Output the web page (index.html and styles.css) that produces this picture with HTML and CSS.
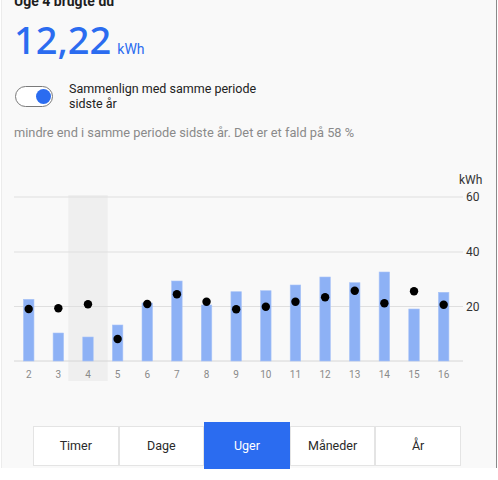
FILE: index.html
```html
<!DOCTYPE html>
<html lang="da">
<head>
<meta charset="utf-8">
<title>Forbrug</title>
<link rel="stylesheet" href="styles.css">
</head>
<body>
<div class="panel">
  <div class="title">Uge 4 brugte du</div>
  <div class="amount"><span class="amount-value">12,22</span><span class="amount-unit">kWh</span></div>
  <div class="compare">
    <div class="toggle"><span class="knob"></span></div>
    <div class="compare-label">Sammenlign med samme periode<br>sidste år</div>
  </div>
  <div class="note">mindre end i samme periode sidste år. Det er et fald på 58 %</div>
  <svg class="chart" width="494" height="215" viewBox="2 170 494 215">
    <rect class="hl" x="68.3" y="195" width="39.4" height="186"/>
    <g class="grid">
      <line x1="14" y1="197" x2="463" y2="197"/>
      <line x1="14" y1="252" x2="463" y2="252"/>
      <line x1="14" y1="306.5" x2="463" y2="306.5"/>
      <line class="base" x1="14" y1="361" x2="463" y2="361"/>
    </g>
    <text class="unit" x="459" y="184">kWh</text>
    <text class="ylab" x="466" y="201">60</text>
    <text class="ylab" x="466" y="256">40</text>
    <text class="ylab" x="466" y="310.5">20</text>
    <g class="bars">
      <rect x="23.45" y="299.3" width="10.5" height="61.7"/>
      <rect x="53.09" y="333" width="10.5" height="28"/>
      <rect x="82.73" y="337" width="10.5" height="24"/>
      <rect x="112.37" y="325" width="10.5" height="36"/>
      <rect x="142.01" y="303" width="10.5" height="58"/>
      <rect x="171.65" y="281" width="10.5" height="80"/>
      <rect x="201.29" y="305" width="10.5" height="56"/>
      <rect x="230.93" y="291.7" width="10.5" height="69.3"/>
      <rect x="260.57" y="290.7" width="10.5" height="70.3"/>
      <rect x="290.21" y="285" width="10.5" height="76"/>
      <rect x="319.85" y="277" width="10.5" height="84"/>
      <rect x="349.49" y="282.7" width="10.5" height="78.3"/>
      <rect x="379.13" y="272" width="10.5" height="89"/>
      <rect x="408.77" y="309" width="10.5" height="52"/>
      <rect x="438.41" y="292.3" width="10.5" height="68.7"/>
    </g>
    <g class="dots">
      <circle cx="28.7" cy="309" r="4.2"/>
      <circle cx="58.34" cy="308.3" r="4.2"/>
      <circle cx="87.98" cy="304.3" r="4.2"/>
      <circle cx="117.62" cy="339" r="4.2"/>
      <circle cx="147.26" cy="304" r="4.2"/>
      <circle cx="176.9" cy="294.3" r="4.2"/>
      <circle cx="206.54" cy="301.7" r="4.2"/>
      <circle cx="236.18" cy="309.3" r="4.2"/>
      <circle cx="265.82" cy="306.7" r="4.2"/>
      <circle cx="295.46" cy="301.7" r="4.2"/>
      <circle cx="325.1" cy="297.3" r="4.2"/>
      <circle cx="354.74" cy="290.7" r="4.2"/>
      <circle cx="384.38" cy="303.3" r="4.2"/>
      <circle cx="414.02" cy="291.3" r="4.2"/>
      <circle cx="443.66" cy="304.7" r="4.2"/>
    </g>
    <g class="xlab">
      <text x="28.7" y="377.5">2</text>
      <text x="58.34" y="377.5">3</text>
      <text x="87.98" y="377.5">4</text>
      <text x="117.62" y="377.5">5</text>
      <text x="147.26" y="377.5">6</text>
      <text x="176.9" y="377.5">7</text>
      <text x="206.54" y="377.5">8</text>
      <text x="236.18" y="377.5">9</text>
      <text x="265.82" y="377.5">10</text>
      <text x="295.46" y="377.5">11</text>
      <text x="325.1" y="377.5">12</text>
      <text x="354.74" y="377.5">13</text>
      <text x="384.38" y="377.5">14</text>
      <text x="414.02" y="377.5">15</text>
      <text x="443.66" y="377.5">16</text>
    </g>
  </svg>
  <div class="tabs">
    <div class="tab">Timer</div>
    <div class="tab">Dage</div>
    <div class="tab active">Uger</div>
    <div class="tab">Måneder</div>
    <div class="tab">År</div>
  </div>
</div>
</body>
</html>
```

FILE: styles.css
```css
html, body {
  margin: 0;
  padding: 0;
  background: #ffffff;
}
body {
  font-family: Roboto, "Noto Sans", "Liberation Sans", sans-serif;
  color: #222222;
  width: 498px;
  height: 480px;
  overflow: hidden;
}
.panel {
  margin: 2px 0 0 1px;
  width: 496px;
  height: 476px;
  box-sizing: border-box;
  background: #f9f9f9;
  border-left: 1px solid #ececec;
  border-right: 1px solid #8a8a8a;
  padding-left: 12px;
}
.title {
  margin-top: -10px;
  font-size: 14px;
  line-height: 18px;
  font-weight: 700;
  color: #1e1e1e;
}
.amount {
  margin-top: 9px;
  height: 40px;
  line-height: 40px;
  font-family: "Noto Sans", Roboto, sans-serif;
  font-size: 38px;
  color: #2b6cf0;
}
.amount-value {
  font-weight: 500;
}
.amount-unit {
  font-family: Roboto, "Noto Sans", sans-serif;
  font-size: 14px;
  line-height: 1;
  margin-left: 6px;
}
.compare {
  margin-top: 22px;
  display: flex;
  align-items: center;
  height: 30px;
}
.toggle {
  margin-left: 1px;
  width: 38px;
  height: 21px;
  box-sizing: border-box;
  border: 1px solid #7a7a7a;
  border-radius: 11px;
  background: #ffffff;
  display: flex;
  align-items: center;
  justify-content: flex-end;
  padding-right: 1px;
}
.knob {
  width: 15px;
  height: 15px;
  border-radius: 50%;
  background: #2b6cf0;
}
.compare-label {
  margin-left: 16px;
  font-size: 12.5px;
  line-height: 15px;
  color: #222222;
}
.note {
  margin-top: 14px;
  font-size: 12.8px;
  line-height: 16px;
  color: #8a8a8a;
}
.chart {
  display: block;
  margin-top: 29px;
  margin-left: -12px;
}
.hl { fill: #efefef; }
.grid line { stroke: #dfdfdf; stroke-width: 1; }
.grid .base { stroke: #d6d6d6; }
.bars rect { fill: #8db1f5; stroke: #a9c4f7; stroke-width: 0.6; }
.dots circle { fill: #000000; }
.unit { font-size: 12px; fill: #333333; font-family: Roboto, sans-serif; }
.ylab { font-size: 12px; fill: #333333; font-family: Roboto, sans-serif; }
.xlab text { font-size: 10px; fill: #8a8a8a; text-anchor: middle; font-family: Roboto, sans-serif; }
.tabs {
  margin-top: 37px;
  margin-left: 19px;
  width: 428px;
  height: 47px;
  display: flex;
  align-items: center;
}
.tab {
  flex: 1;
  height: 40px;
  box-sizing: border-box;
  border: 1px solid #e4e4e4;
  background: #ffffff;
  display: flex;
  align-items: center;
  justify-content: center;
  font-size: 12.5px;
  color: #2a2a2a;
}
.tab.active {
  height: 47px;
  background: #2b6cf0;
  border-color: #2b6cf0;
  color: #ffffff;
}
```
